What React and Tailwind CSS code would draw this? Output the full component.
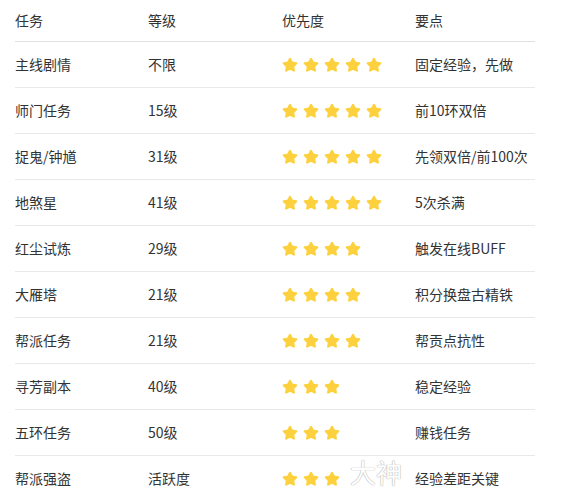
import { Star } from "lucide-react";

const rows = [
  ["主线剧情", "不限", 5, "固定经验，先做"],
  ["师门任务", "15级", 5, "前10环双倍"],
  ["捉鬼/钟馗", "31级", 5, "先领双倍/前100次"],
  ["地煞星", "41级", 5, "5次杀满"],
  ["红尘试炼", "29级", 4, "触发在线BUFF"],
  ["大雁塔", "21级", 4, "积分换盘古精铁"],
  ["帮派任务", "21级", 4, "帮贡点抗性"],
  ["寻芳副本", "40级", 3, "稳定经验"],
  ["五环任务", "50级", 3, "赚钱任务"],
  ["帮派强盗", "活跃度", 3, "经验差距关键"],
];

function Stars({ n }) {
  return (
    <div className="flex items-center gap-[5px]">
      {Array.from({ length: n }).map((_, i) => (
        <Star key={i} size={16} strokeWidth={2} className="text-[#fdd13e] fill-[#fdd13e]" />
      ))}
    </div>
  );
}

export default function App() {
  return (
    <div
      className="relative w-[566px] h-[491px] overflow-hidden bg-white text-[14px] text-[#333]"
      style={{ fontFamily: '"Noto Sans CJK SC", "Noto Sans", sans-serif' }}
    >
      <div className="ml-[15px] w-[520px]">
        <div className="grid grid-cols-[133px_134px_133px_120px] h-[42px] items-center border-b border-[#e0e0e0]">
          <div>任务</div>
          <div>等级</div>
          <div>优先度</div>
          <div>要点</div>
        </div>
        {rows.map(([task, lv, n, note]) => (
          <div
            key={task}
            className="grid grid-cols-[133px_134px_133px_120px] h-[46px] items-center border-b border-[#e8e8e8]"
          >
            <div>{task}</div>
            <div>{lv}</div>
            <Stars n={n} />
            <div className="whitespace-nowrap">{note}</div>
          </div>
        ))}
      </div>
      <div
        className="absolute left-[350px] top-[459px] text-[26px] text-white leading-none"
        style={{ textShadow: "0 0 1px #aaa, 0 0 1px #aaa" }}
      >
        大神
      </div>
    </div>
  );
}
